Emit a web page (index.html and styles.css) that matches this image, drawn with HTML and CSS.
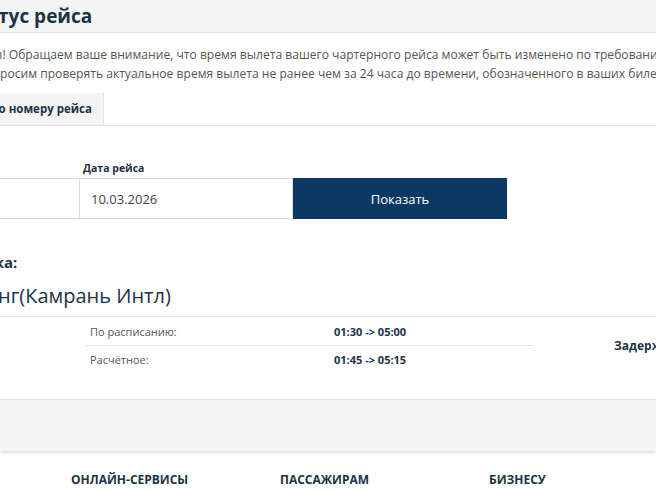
FILE: index.html
```html
<!DOCTYPE html>
<html lang="ru">

<head>
    <meta charset="UTF-8">
    <title>Статус рейса</title>
    <link rel="stylesheet" href="styles.css">
</head>

<body>
    <!-- Page title -->
    <div class="page-head">
        <div class="inner">
            <h1 class="title">Статус рейса</h1>
        </div>
    </div>

    <div class="page-body">
        <div class="inner">
            <div class="notice">
                <p>Уважаемые пассажиры! Обращаем ваше внимание, что время вылета вашего чартерного рейса может быть изменено по требованию авиакомпании и аэропорта.</p>
                <p>Просим проверять актуальное время вылета не ранее чем за 24 часа до времени, обозначенного в ваших билетах.</p>
            </div>
        </div>

        <!-- Tabs -->
        <div class="tabs">
            <div class="inner">
                <div class="tab active">По номеру рейса</div>
            </div>
        </div>

        <!-- Search form -->
        <div class="inner">
            <div class="search-form">
                <div class="field field-number">
                    <label>Номер рейса</label>
                    <input type="text" value="">
                </div>
                <div class="field">
                    <label>Дата рейса</label>
                    <input type="text" value="10.03.2026">
                </div>
                <button class="show-btn">Показать</button>
            </div>
        </div>

        <!-- Result -->
        <div class="inner">
            <div class="result-head">
                <div class="result-label">Остановка:</div>
                <div class="result-airport">Нячанг(Камрань Интл)</div>
            </div>
        </div>
        <div class="result-line"></div>
        <div class="inner">
            <div class="result-table">
                <div class="rows">
                    <div class="row">
                        <span class="row-label">По расписанию:</span>
                        <span class="row-time">01:30 -&gt; 05:00</span>
                    </div>
                    <div class="row">
                        <span class="row-label">Расчётное:</span>
                        <span class="row-time">01:45 -&gt; 05:15</span>
                    </div>
                </div>
                <div class="status">Задерживается</div>
            </div>
        </div>
    </div>

    <div class="grey-band"></div>

    <!-- Footer -->
    <div class="footer">
        <div class="footer-col">ОНЛАЙН-СЕРВИСЫ</div>
        <div class="footer-col">ПАССАЖИРАМ</div>
        <div class="footer-col">БИЗНЕСУ</div>
    </div>
</body>

</html>
```

FILE: styles.css
```css
* {
    margin: 0;
    padding: 0;
    box-sizing: border-box;
}

body {
    font-family: 'Open Sans', 'Noto Sans', sans-serif;
    background-color: #fff;
    color: #1b3346;
    overflow: hidden;
}

.inner {
    margin-left: -135px;
    width: 940px;
}

.page-head {
    height: 33px;
    background-color: #f4f4f4;
    border-bottom: 1px solid #e4e4e4;
}

.title {
    padding-left: 99px;
    font-size: 19px;
    font-weight: 700;
    line-height: 32px;
    color: #1b3346;
}

.notice {
    padding-top: 12px;
    text-align: center;
    white-space: nowrap;
    font-size: 12.1px;
    line-height: 19px;
    color: #555;
}

.tabs {
    margin-top: 10px;
    border-bottom: 1px solid #e4e4e4;
}

.tab {
    display: inline-block;
    margin-left: 114px;
    height: 32px;
    padding: 0 11px;
    line-height: 32px;
    font-size: 11.5px;
    font-weight: 700;
    background-color: #f4f4f4;
    border-right: 1px solid #e4e4e4;
}

.search-form {
    display: flex;
    align-items: flex-end;
    margin-top: 33px;
}

.field {
    display: flex;
    flex-direction: column;
    width: 214px;
}

.field label {
    font-size: 10.5px;
    font-weight: 700;
    line-height: 18px;
    padding-left: 4px;
    margin-bottom: 1px;
}

.field input {
    height: 41px;
    border: 1px solid #dcdcdc;
    padding: 0 11px;
    font-family: inherit;
    font-size: 13px;
    color: #444;
    outline: none;
}

.field-number input {
    border-right: none;
}

.show-btn {
    width: 214px;
    height: 41px;
    border: none;
    background-color: #0c3963;
    color: #fff;
    font-family: inherit;
    font-size: 13px;
}

.result-head {
    padding-left: 64px;
    margin-top: 33px;
}

.result-label {
    font-size: 15px;
    font-weight: 700;
    line-height: 20px;
}

.result-airport {
    margin-top: 11px;
    margin-left: 20px;
    font-size: 20px;
    line-height: 26px;
}

.result-line {
    margin-top: 7px;
    border-top: 1px solid #e6e6e6;
}

.result-table {
    display: flex;
    align-items: center;
    padding-left: 220px;
}

.rows {
    width: 448px;
}

.row {
    display: flex;
    align-items: center;
    height: 28px;
    padding-left: 5px;
}

.row + .row {
    border-top: 1px solid #e6e6e6;
}

.row-label {
    width: 244px;
    font-size: 11px;
    color: #555;
}

.row-time {
    font-size: 11px;
    font-weight: 700;
}

.status {
    margin-left: 81px;
    font-size: 12px;
    font-weight: 700;
}

.grey-band {
    margin-top: 26px;
    height: 52px;
    background-color: #f4f4f4;
    border-top: 1px solid #e4e4e4;
    box-shadow: 0 2px 3px rgba(0, 0, 0, 0.12);
}

.footer {
    display: flex;
    padding-left: 71px;
    padding-top: 20px;
}

.footer-col {
    flex-shrink: 0;
    width: 209px;
    font-size: 12px;
    font-weight: 700;
}
```
